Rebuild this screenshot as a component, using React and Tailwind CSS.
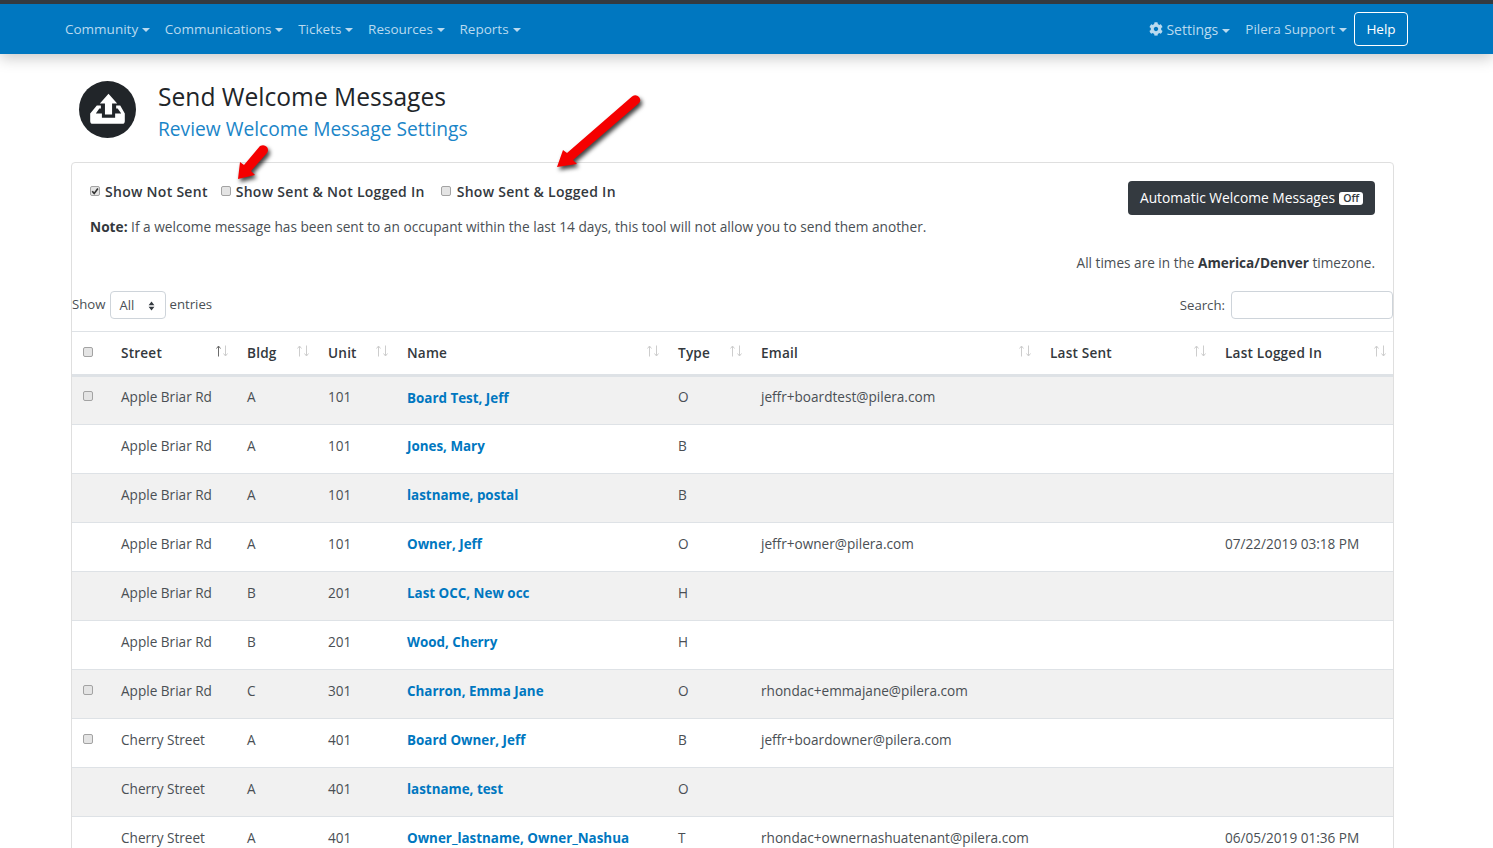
import { useState } from "react"
import { FaCog } from "react-icons/fa"

const navLeft = ["Community", "Communications", "Tickets", "Resources", "Reports"]

const rows = [
  { check: true, street: "Apple Briar Rd", bldg: "A", unit: "101", name: "Board Test, Jeff", type: "O", email: "jeffr+boardtest@pilera.com", login: "" },
  { street: "Apple Briar Rd", bldg: "A", unit: "101", name: "Jones, Mary", type: "B", email: "", login: "" },
  { street: "Apple Briar Rd", bldg: "A", unit: "101", name: "lastname, postal", type: "B", email: "", login: "" },
  { street: "Apple Briar Rd", bldg: "A", unit: "101", name: "Owner, Jeff", type: "O", email: "jeffr+owner@pilera.com", login: "07/22/2019 03:18 PM" },
  { street: "Apple Briar Rd", bldg: "B", unit: "201", name: "Last OCC, New occ", type: "H", email: "", login: "" },
  { street: "Apple Briar Rd", bldg: "B", unit: "201", name: "Wood, Cherry", type: "H", email: "", login: "" },
  { check: true, street: "Apple Briar Rd", bldg: "C", unit: "301", name: "Charron, Emma Jane", type: "O", email: "rhondac+emmajane@pilera.com", login: "" },
  { check: true, street: "Cherry Street", bldg: "A", unit: "401", name: "Board Owner, Jeff", type: "B", email: "jeffr+boardowner@pilera.com", login: "" },
  { street: "Cherry Street", bldg: "A", unit: "401", name: "lastname, test", type: "O", email: "", login: "" },
  { street: "Cherry Street", bldg: "A", unit: "401", name: "Owner_lastname, Owner_Nashua", type: "T", email: "rhondac+ownernashuatenant@pilera.com", login: "06/05/2019 01:36 PM" },
]

const columns = [
  { label: "Street", w: "w-[126px]", active: true },
  { label: "Bldg", w: "w-[81px]" },
  { label: "Unit", w: "w-[79px]" },
  { label: "Name", w: "w-[271px]" },
  { label: "Type", w: "w-[83px]" },
  { label: "Email", w: "w-[289px]" },
  { label: "Last Sent", w: "w-[175px]" },
  { label: "Last Logged In", w: "w-[180px]" },
]

const Caret = () => (
  <span className="ml-[4px] inline-block align-[2px] border-x-[4.5px] border-t-[4.5px] border-x-transparent border-t-current"></span>
)

const Check = ({ checked, onChange }) => (
  <span className="relative inline-flex w-[10px] h-[10px]">
    <input
      type="checkbox"
      checked={!!checked}
      onChange={onChange || (() => {})}
      className="appearance-none w-[10px] h-[10px] m-0 rounded-[2px] border border-[#a3a3a3] bg-[#e4e4e4] block"
    />
    {checked && (
      <svg viewBox="0 0 10 10" className="absolute inset-0 w-[10px] h-[10px] pointer-events-none">
        <path d="M2.2 5.2 L4.2 7.4 L7.9 2.6" fill="none" stroke="#333" strokeWidth="1.6" />
      </svg>
    )}
  </span>
)

const SortIcon = ({ active }) => (
  <svg viewBox="0 0 14 12" className="absolute right-[6px] top-[13px] w-[14px] h-[12px]" fill="none" strokeWidth="1">
    <path d="M3.5 11.5 V1 M1.5 3.5 L3.5 1 L5.5 3.5" stroke={active ? "#6b6b6b" : "#cdcdcd"} />
    <path d="M10.5 0.5 V11 M8.5 8.5 L10.5 11 L12.5 8.5" stroke="#cdcdcd" />
  </svg>
)

const Arrow = ({ className, viewBox, d }) => (
  <svg viewBox={viewBox} className={`overflow-visible drop-shadow-[2px_3px_2px_rgba(0,0,0,0.75)] ${className}`}>
    <path d={d} fill="#f50000" />
  </svg>
)

const App = () => {
  const [filters, setFilters] = useState({ notSent: true, notLogged: false, logged: false })

  return (
    <div className="relative h-[848px] overflow-hidden bg-white text-[13.6px] text-[#4a4f54] font-['Open_Sans','Noto_Sans',sans-serif]">
      {/* Top nav */}
      <div className="border-t-4 border-[#343a40] bg-[#0077c0] h-[54px] shadow-[0_4px_14px_rgba(0,0,0,0.22)] flex items-center pl-[65px] pr-[85px] text-[#b9daef] text-[13.5px]">
        <div className="flex gap-[14.7px]">
          {navLeft.map((item) => (
            <a key={item} className="whitespace-nowrap">
              {item}
              <Caret />
            </a>
          ))}
        </div>
        <div className="ml-auto flex items-center">
          <FaCog className="text-[14px] mr-[3px]" />
          <a className="whitespace-nowrap text-[14px]">Settings<Caret /></a>
          <a className="whitespace-nowrap ml-[15px]">Pilera Support<Caret /></a>
          <button className="ml-[7px] h-[34px] w-[54px] rounded-[4px] border border-white text-white">Help</button>
        </div>
      </div>

      {/* Page heading */}
      <div className="flex pl-[79px] pt-[27px] h-[108px]">
        <div className="w-[57px] h-[57px] rounded-full bg-[#212529] flex items-center justify-center shrink-0">
          <svg viewBox="0 0 56 56" className="w-[57px] h-[57px]">
            <path fill="#fff" d="M29 12.5 L37.5 22 L32.5 22 L32.5 33 L25.5 33 L25.5 22 L20.5 22 Z" />
            <path fill="#fff" d="M17.5 24 L21.5 24 L21.5 27 L20 27 L16.5 32 L22.5 32 L22.5 36 L35.5 36 L35.5 32 L41.5 32 L38 27 L36.5 27 L36.5 24 L40.5 24 L45 32 L45 39.5 Q45 42 42.5 42 L13.5 42 Q11 42 11 39.5 L11 32 Z" />
          </svg>
        </div>
        <div className="ml-[22px] pt-[1px]">
          <h1 className="text-[24.6px] leading-[30px] text-[#212529]">Send Welcome Messages</h1>
          <a className="text-[19.2px] leading-[28px] text-[#1a85c8] block mt-[3px]">Review Welcome Message Settings</a>
        </div>
      </div>

      {/* Card */}
      <div className="mx-[71px] w-[1323px] border border-[#dfdfdf] rounded-[4px] pt-[18px]">
        <div className="flex justify-between pl-[18px] pr-[18px]">
          <div>
            <div className="flex items-center h-[20px] font-semibold text-[14px] text-[#33383d] tracking-[0.28px]">
              <Check checked={filters.notSent} onChange={() => setFilters({ ...filters, notSent: !filters.notSent })} />
              <span className="ml-[5px] mr-[13px]">Show Not Sent</span>
              <Check checked={filters.notLogged} onChange={() => setFilters({ ...filters, notLogged: !filters.notLogged })} />
              <span className="ml-[5px] mr-[16px]">Show Sent &amp; Not Logged In</span>
              <Check checked={filters.logged} onChange={() => setFilters({ ...filters, logged: !filters.logged })} />
              <span className="ml-[6px]">Show Sent &amp; Logged In</span>
            </div>
            <p className="mt-[16px] leading-[20px] text-[13.7px]">
              <b className="font-bold text-[#33383d]">Note:</b> If a welcome message has been sent to an occupant within the last 14 days, this tool will not allow you to send them another.
            </p>
          </div>
          <button className="h-[34px] px-[12px] rounded-[4px] bg-[#343a40] text-white text-[13.8px] flex items-center whitespace-nowrap">
            Automatic Welcome Messages
            <span className="ml-[4px] px-[4px] h-[13px] rounded-[3px] bg-white text-[#343a40] text-[10.5px] font-semibold leading-[13px]">Off</span>
          </button>
        </div>

        <p className="text-right pr-[18px] mt-[16px] leading-[20px]">
          All times are in the <b className="font-bold text-[#33383d]">America/Denver</b> timezone.
        </p>

        <div className="flex justify-between items-center mt-[18px] h-[28px]">
          <div className="flex items-center text-[13.2px]">
            Show
            <span className="ml-[5px] mr-[3px] w-[56px] h-[28px] rounded-[4px] border border-[#ced4da] flex items-center justify-between pl-[8px] pr-[10px] pt-[2px] text-[13px]">
              All
              <svg viewBox="0 0 8 12" className="w-[7px] h-[10px]">
                <path d="M4 0.5 L7.5 5 L0.5 5 Z M4 11.5 L0.5 7 L7.5 7 Z" fill="#343a40" />
              </svg>
            </span>
            entries
          </div>
          <label className="flex items-center text-[13.2px]">
            <span className="pt-[1px]">Search:</span>
            <input className="ml-[6px] w-[162px] h-[28px] rounded-[4px] border border-[#ced4da] outline-none" />
          </label>
        </div>

        <table className="w-full table-fixed border-collapse mt-[12px]">
          <colgroup>
            <col className="w-[37px]" />
            {columns.map((c) => <col key={c.label} className={c.w} />)}
          </colgroup>
          <thead>
            <tr className="h-[44px] border-y border-[#dee2e6] border-b-[3px] border-b-[#dee2e6]">
              <th className="pl-[11px] pb-[2px] text-left align-middle"><Check /></th>
              {columns.map((c) => (
                <th key={c.label} className="relative px-[12px] text-left font-semibold text-[13.6px] text-[#33383d] tracking-[0.2px]">
                  {c.label}
                  <SortIcon active={c.active} />
                </th>
              ))}
            </tr>
          </thead>
          <tbody>
            {rows.map((r, i) => (
              <tr key={r.name} className={`h-[49px] border-b border-[#dee2e6] ${i % 2 === 0 ? "bg-[#f1f1f1]" : "bg-white"}`}>
                <td className="pl-[11px] pb-[8px]">{r.check && <Check />}</td>
                <td className="px-[12px] pb-[6px] whitespace-nowrap">{r.street}</td>
                <td className="px-[12px] pb-[6px]">{r.bldg}</td>
                <td className="px-[12px] pb-[6px]">{r.unit}</td>
                <td className="px-[12px] pb-[5px] font-bold text-[13.4px] text-[#0077c0] whitespace-nowrap">{r.name}</td>
                <td className="px-[12px] pb-[6px]">{r.type}</td>
                <td className="px-[12px] pb-[6px] whitespace-nowrap">{r.email}</td>
                <td className="px-[12px] pb-[6px]"></td>
                <td className="px-[12px] pb-[6px] whitespace-nowrap">{r.login}</td>
              </tr>
            ))}
          </tbody>
        </table>
      </div>

      {/* Annotation arrows drawn on the screenshot */}
      <Arrow
        className="absolute left-[235px] top-[143px] w-[40px] h-[40px]"
        viewBox="0 0 40 40"
        d="M3 36 L5 19 L9 22 L25 3 Q29 1 32 4 Q34 7 32 10 L16 28 L20 32 Z"
      />
      <Arrow
        className="absolute left-[553px] top-[94px] w-[92px] h-[78px]"
        viewBox="0 0 92 78"
        d="M4 73 L10 56 L14 59 L79 2.5 Q83 0 86 3 Q89 7 85 10 L20 66 L24 70 Z"
      />
    </div>
  )
}

export default App
